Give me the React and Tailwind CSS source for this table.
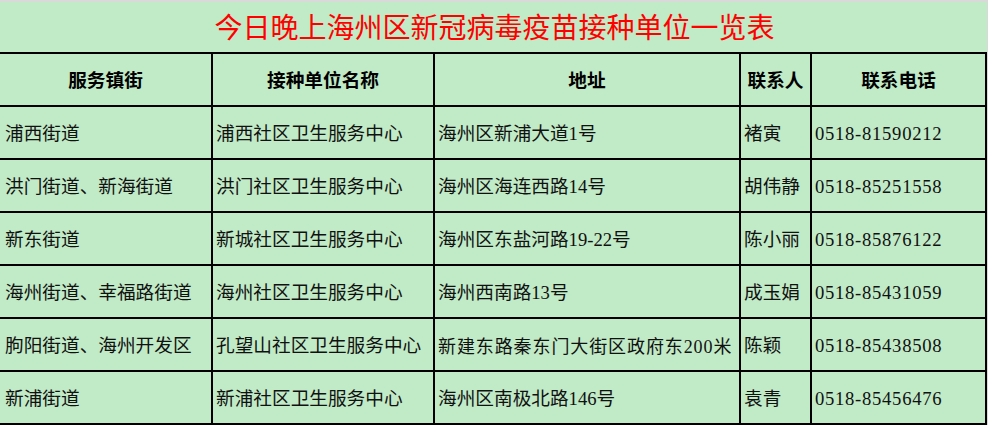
import React from "react";

const rows = [
  ["浦西街道", "浦西社区卫生服务中心", "海州区新浦大道1号", "褚寅", "0518-81590212"],
  ["洪门街道、新海街道", "洪门社区卫生服务中心", "海州区海连西路14号", "胡伟静", "0518-85251558"],
  ["新东街道", "新城社区卫生服务中心", "海州区东盐河路19-22号", "陈小丽", "0518-85876122"],
  ["海州街道、幸福路街道", "海州社区卫生服务中心", "海州西南路13号", "成玉娟", "0518-85431059"],
  ["朐阳街道、海州开发区", "孔望山社区卫生服务中心", "新建东路秦东门大街区政府东200米", "陈颖", "0518-85438508"],
  ["新浦街道", "新浦社区卫生服务中心", "海州区南极北路146号", "袁青", "0518-85456476"],
];

const headers = ["服务镇街", "接种单位名称", "地址", "联系人", "联系电话"];

const font = { fontFamily: '"Liberation Serif", "Noto Sans CJK SC", serif' };

export default function App() {
  return (
    <div className="w-[988px] h-[425px] overflow-hidden bg-[#c1eac7] text-black" style={font}>
      <div className="h-[2px] bg-[#d9d9d9]" />
      <div className="flex">
        <div className="w-[987px]">
          <div className="h-[50px] flex items-center justify-center text-[28px] text-[#ff0000] leading-none pl-[2px] pt-[3px]">
            今日晚上海州区新冠病毒疫苗接种单位一览表
          </div>
          <div className="grid grid-cols-[211px_220px_304px_69px_173px] auto-rows-[51px] gap-[2px] bg-black pt-[2px] pr-[2px] pb-[2px]">
            {headers.map((h) => (
              <div
                key={h}
                className="bg-[#c1eac7] flex items-center justify-center font-bold text-[18.67px] leading-none pt-[3px] whitespace-nowrap"
              >
                {h}
              </div>
            ))}
            {rows.map((r, ri) =>
              r.map((c, ci) => (
                <div
                  key={ri + "-" + ci}
                  className={
                    "bg-[#c1eac7] flex items-center leading-none pt-[4px] whitespace-nowrap overflow-hidden text-[#111] " +
                    (ci === 0 ? "pl-[5px] " : "pl-[3px] ") +
                    (ci === 4
                      ? "text-[18.67px] tracking-[0.7px]"
                      : ci === 2 && c.length > 14
                      ? "text-[18px] tracking-[0.9px]"
                      : "text-[18.67px]")
                  }
                >
                  {c}
                </div>
              ))
            )}
          </div>
        </div>
        <div className="w-[1px] bg-[#d9d9d9]" />
      </div>
    </div>
  );
}
